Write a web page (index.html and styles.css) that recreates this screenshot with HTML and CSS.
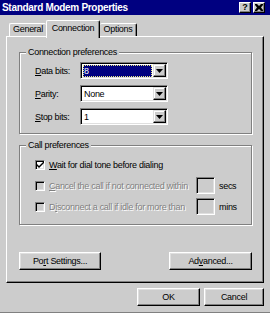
FILE: index.html
```html
<!DOCTYPE html>
<html lang="en">
<head>
    <meta charset="UTF-8">
    <title>Standard Modem Properties</title>
    <link rel="stylesheet" href="styles.css">
</head>
<body>
    <div class="window">
        <!-- title bar -->
        <div class="titlebar">
            <span class="title-text">Standard Modem Properties</span>
            <div class="title-buttons">
                <div class="title-btn help">?</div>
                <div class="title-btn">
                    <svg width="8" height="7" viewBox="0 0 8 7">
                        <path d="M0 0h2l2 2 2-2h2v1l-2 2.5 2 2.5v1h-2l-2-2-2 2h-2v-1l2-2.5-2-2.5z" fill="#000"/>
                    </svg>
                </div>
            </div>
        </div>

        <!-- tabs -->
        <div class="tabs">
            <div class="tab tab-first">General</div>
            <div class="tab tab-active">Connection</div>
            <div class="tab tab-last">Options</div>
        </div>

        <div class="panel">
            <div class="group">
                <div class="group-title">Connection preferences</div>
                <div class="field-row">
                    <span class="field-label"><u>D</u>ata bits:</span>
                    <div class="combo">
                        <div class="combo-value selected">8</div>
                        <div class="combo-btn">
                            <svg width="7" height="4" viewBox="0 0 7 4"><path d="M0 0h7l-3.5 4z" fill="#000"/></svg>
                        </div>
                    </div>
                </div>
                <div class="field-row">
                    <span class="field-label"><u>P</u>arity:</span>
                    <div class="combo">
                        <div class="combo-value">None</div>
                        <div class="combo-btn">
                            <svg width="7" height="4" viewBox="0 0 7 4"><path d="M0 0h7l-3.5 4z" fill="#000"/></svg>
                        </div>
                    </div>
                </div>
                <div class="field-row">
                    <span class="field-label"><u>S</u>top bits:</span>
                    <div class="combo">
                        <div class="combo-value">1</div>
                        <div class="combo-btn">
                            <svg width="7" height="4" viewBox="0 0 7 4"><path d="M0 0h7l-3.5 4z" fill="#000"/></svg>
                        </div>
                    </div>
                </div>
            </div>

            <div class="group group-call">
                <div class="group-title">Call preferences</div>
                <div class="check-grid">
                    <div class="checkbox">
                        <svg width="7" height="7" viewBox="0 0 7 7"><path d="M0 3l2 2 5-5v2l-5 5-2-2z" fill="#000"/></svg>
                    </div>
                    <span class="check-text wide"><u>W</u>ait for dial tone before dialing</span>

                    <div class="checkbox disabled"></div>
                    <span class="check-text disabled-text"><u>C</u>ancel the call if not connected within</span>
                    <div class="textbox"></div>
                    <span class="unit">secs</span>

                    <div class="checkbox disabled"></div>
                    <span class="check-text disabled-text">D<u>i</u>sconnect a call if idle for more than</span>
                    <div class="textbox"></div>
                    <span class="unit">mins</span>
                </div>
            </div>

            <div class="panel-buttons">
                <button class="btn btn-port">Po<u>r</u>t Settings...</button>
                <button class="btn btn-adv">Ad<u>v</u>anced...</button>
            </div>
        </div>

        <div class="footer">
            <button class="btn btn-ok">OK</button>
            <button class="btn btn-cancel">Cancel</button>
        </div>
    </div>
</body>
</html>
```

FILE: styles.css
```css
body {
    margin: 0;
    font-family: "Liberation Sans", Arial, sans-serif;
    font-size: 9px;
    letter-spacing: -0.3px;
    color: #000;
}

.window {
    width: 270px;
    height: 313px;
    background-color: #cccccc;
    border-bottom: 1px solid #808080;
    box-sizing: border-box;
    overflow: hidden;
}

/* title bar */
.titlebar {
    height: 15px;
    background-color: #000080;
    display: flex;
    align-items: center;
    padding: 0 5px 0 2px;
}

.title-text {
    color: #fff;
    font-weight: bold;
    font-size: 10px;
    letter-spacing: -0.3px;
}

.title-buttons {
    margin-left: auto;
    display: flex;
    gap: 2px;
}

.title-btn {
    width: 12px;
    height: 11px;
    box-sizing: border-box;
    background-color: #cccccc;
    border: 1px solid;
    border-color: #fff #000 #000 #fff;
    box-shadow: inset -1px -1px #808080;
    display: flex;
    align-items: center;
    justify-content: center;
}

.help {
    font-weight: bold;
    font-size: 9px;
    line-height: 9px;
    letter-spacing: 0;
}

/* tabs */
.tabs {
    display: flex;
    align-items: flex-end;
    height: 16px;
    margin: 5px 0 0 9px;
}

.tab {
    box-sizing: border-box;
    height: 13px;
    line-height: 11px;
    text-align: center;
    background-color: #cccccc;
    border-top: 1px solid #fff;
    border-radius: 2px 2px 0 0;
}

.tab-first {
    width: 37px;
    border-left: 1px solid #fff;
}

.tab-last {
    width: 37px;
    border-right: 1px solid #000;
    box-shadow: inset -1px 0 #808080;
}

.tab-active {
    position: relative;
    z-index: 1;
    width: 54px;
    height: 18px;
    margin-bottom: -2px;
    line-height: 14px;
    border-left: 1px solid #fff;
    border-right: 1px solid #000;
    box-shadow: inset -1px 0 #808080;
}

/* tab page */
.panel {
    margin-left: 6px;
    width: 258px;
    box-sizing: border-box;
    padding: 15px 11px 12px 12px;
    border: 1px solid;
    border-color: #fff #000 #000 #fff;
    box-shadow: inset -1px -1px #808080;
}

.group {
    border: 1px solid #808080;
    box-shadow: inset 1px 1px #fff, 1px 1px #fff;
    padding: 0 0 8px 15px;
}

.group-call {
    margin-top: 11px;
    padding-bottom: 9px;
}

.group-title {
    display: table;
    margin: -6px 0 4px -9px;
    padding: 0 2px;
    line-height: 11px;
    background-color: #cccccc;
}

.group-call .group-title {
    margin-bottom: 5px;
}

.field-row {
    display: flex;
    align-items: center;
    height: 17px;
    margin-bottom: 6px;
}

.field-row:last-child {
    margin-bottom: 0;
}

.field-label {
    width: 45px;
}

.combo {
    display: flex;
    width: 88px;
    height: 17px;
    box-sizing: border-box;
    padding: 1px;
    background-color: #fff;
    border: 1px solid;
    border-color: #808080 #fff #fff #808080;
    box-shadow: inset 1px 1px #000, inset -1px -1px #dfdfdf;
}

.combo-value {
    flex: 1;
    margin: 1px 1px 0 1px;
    padding-left: 1px;
    line-height: 12px;
}

.combo-value.selected {
    background-color: #000080;
    color: #fff;
    outline: 1px dotted #e8e880;
    outline-offset: -1px;
}

.combo-btn {
    width: 13px;
    box-sizing: border-box;
    background-color: #cccccc;
    border: 1px solid;
    border-color: #dfdfdf #000 #000 #dfdfdf;
    box-shadow: inset -1px -1px #808080, inset 1px 1px #fff;
    display: flex;
    align-items: center;
    justify-content: center;
}

/* call preferences */
.check-grid {
    display: grid;
    grid-template-columns: 10px 143px 19px auto;
    grid-auto-rows: 17px;
    row-gap: 4px;
    column-gap: 4px;
    align-items: center;
}

.checkbox {
    width: 10px;
    height: 10px;
    box-sizing: border-box;
    background-color: #fff;
    border: 1px solid;
    border-color: #808080 #fff #fff #808080;
    box-shadow: inset 1px 1px #000, inset -1px -1px #dfdfdf;
    display: flex;
    align-items: center;
    justify-content: center;
}

.checkbox.disabled {
    background-color: #cccccc;
}

.check-text.wide {
    grid-column: 2 / -1;
}

.disabled-text,
.unit {
    color: #808080;
    text-shadow: 1px 1px 0 #fff;
}

.unit {
    color: #000;
    text-shadow: none;
}

.textbox {
    height: 17px;
    box-sizing: border-box;
    border: 1px solid;
    border-color: #808080 #fff #fff #808080;
    box-shadow: inset 1px 1px #000, inset -1px -1px #dfdfdf;
}

/* buttons */
.panel-buttons {
    display: flex;
    justify-content: space-between;
    margin-top: 27px;
}

.btn {
    height: 18px;
    box-sizing: border-box;
    padding: 0;
    font-family: inherit;
    font-size: 9px;
    letter-spacing: -0.3px;
    color: #000;
    background-color: #cccccc;
    border: 1px solid;
    border-color: #fff #000 #000 #fff;
    box-shadow: inset -1px -1px #808080, inset 1px 1px #dfdfdf;
}

.btn-port {
    width: 82px;
}

.btn-adv {
    width: 83px;
}

.footer {
    display: flex;
    justify-content: flex-end;
    gap: 4px;
    margin-top: 5px;
    padding-right: 6px;
}

.btn-ok {
    width: 63px;
}

.btn-cancel {
    width: 60px;
}
```
